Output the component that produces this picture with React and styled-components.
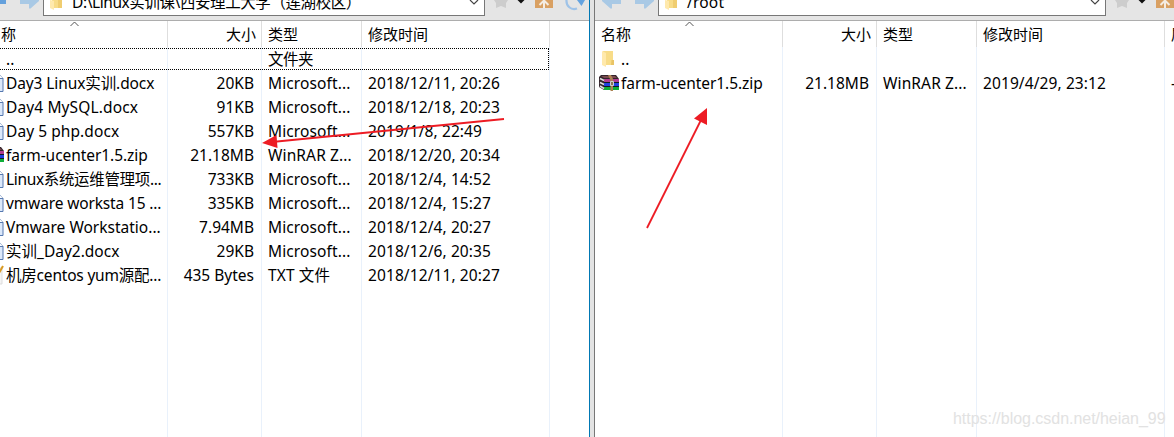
import React from 'react';
import styled, { createGlobalStyle } from 'styled-components';

const Global = createGlobalStyle`
  * { box-sizing: border-box; }
  body { margin: 0; background: #fff; overflow: hidden; }
`;

const Window = styled.div`
  position: relative;
  display: flex;
  width: 1174px;
  height: 437px;
  overflow: hidden;
  color: #000;
  background: #fff;
  font: 15.5px/24px 'Noto Sans', 'Noto Sans CJK SC', sans-serif;
`;

const Pane = styled.section`
  display: flex;
  flex-direction: column;
  flex: none;
  width: ${p => p.$width}px;
  overflow: hidden;
  background: #fff;
`;

const Splitter = styled.div`
  flex: none;
  width: 6px;
  background: #e3e3e3;
  border-left: 1px solid #0078b4;
  border-right: 1px solid #777;
`;

const Toolbar = styled.div`
  display: flex;
  align-items: flex-start;
  flex: none;
  height: 21px;
  margin-left: ${p => p.$shift}px;
  background: #e5e5e5;
  border-bottom: 1px solid #adadad;
  svg { display: block; flex: none; }
`;

const NavButtons = styled.div`
  display: flex;
  gap: 12px;
  width: 63px;
  flex: none;
  padding-left: 7px;
`;

const Address = styled.div`
  display: flex;
  flex: none;
  width: ${p => p.$width}px;
  height: 16px;
  padding: 0 5px 0 6px;
  background: #fff;
  border: 1px solid #777;
  border-top: 0;
`;

const Path = styled.span`
  flex: 1;
  height: 25px;
  margin: -10px 0 0 10px;
  line-height: 24px;
  white-space: nowrap;
  letter-spacing: ${p => p.$track || 0}px;
`;

const Tools = styled.div`
  display: flex;
  padding-left: 9px;
`;

const Gap = styled.span`
  width: ${p => p.$size}px;
`;

const List = styled.div`
  display: flex;
  flex: 1;
  margin-left: ${p => p.$shift}px;
`;

const Column = styled.div`
  flex: none;
  width: ${p => p.$width}px;
  border-right: 1px solid #e9f1fb;
  letter-spacing: ${p => p.$track || 0}px;
`;

const Header = styled.div`
  position: relative;
  height: 26px;
  margin-right: -1px;
  padding: 1px ${p => (p.$right ? 5 : 6)}px 0 6px;
  border-right: 1px solid #dedede;
  text-align: ${p => (p.$right ? 'right' : 'left')};
  white-space: nowrap;
  font-size: 15px;
  letter-spacing: 0;
`;

const SortMark = styled.svg`
  position: absolute;
  left: 90px;
  top: 0;
`;

const Cell = styled.div`
  display: flex;
  align-items: center;
  justify-content: ${p => (p.$right ? 'flex-end' : 'flex-start')};
  height: 24px;
  padding: 0 ${p => (p.$right ? 7 : 0)}px 0 ${p => (p.$icon ? 4 : 6)}px;
  white-space: nowrap;
  svg { flex: none; margin-right: 2px; }
`;

const Label = styled.span`
  letter-spacing: ${p => (p.$track === undefined ? 'inherit' : `${p.$track}px`)};
`;

const FocusFrame = styled.div`
  position: absolute;
  left: -2px;
  top: 48px;
  width: 551px;
  height: 22px;
  border: 1px dotted #000;
`;

const Overlay = styled.svg`
  position: absolute;
  inset: 0;
  pointer-events: none;
`;

const Watermark = styled.div`
  position: absolute;
  left: 953px;
  top: 409px;
  font: 16px/20px 'Liberation Sans', sans-serif;
  letter-spacing: -0.03px;
  color: #e2e2e2;
`;

const FolderIcon = () => (
  <svg width="20" height="20" viewBox="0 0 20 20">
    <path d="M4 2h10v14H6z" fill="#f8dc88" />
    <path d="M12.500 11h2.500v5h-3z" fill="#e9c466" />
    <path d="M3 2l4 2v14l-4-2z" fill="#ffe9ac" />
  </svg>
);

const DocIcon = () => (
  <svg width="20" height="20" viewBox="0 0 20 20">
    <path d="M5 1.500h10l4 4v13H5z" fill="#dbe8fa" stroke="#5679b0" />
    <path d="M15 1.500v4h4" fill="#fff" stroke="#5679b0" />
  </svg>
);

const TextIcon = () => (
  <svg width="20" height="20" viewBox="0 0 20 20">
    <path d="M3 3h15v16H3z" fill="#f4f4f4" stroke="#ddd" />
    <path d="M19 1l-4 7" stroke="#d99a22" strokeWidth="2" />
  </svg>
);

const ArchiveIcon = () => (
  <svg width="20" height="16" viewBox="0 0 20 16">
    <path d="M0 2l2-2h15l3 4v11H5l-5-3z" fill="#33242c" />
    <path d="M2 1h14l2 2H5z" fill="#7a4a4c" />
    <path d="M5 4h15v3H5z" fill="#b03c90" />
    <path d="M5 8h15v3H5z" fill="#2040e0" />
    <path d="M5 12h15v3H5z" fill="#0fae38" />
    <path d="M5 7.500h15M5 11.500h15" stroke="#111a20" />
    <path d="M1 3.500l4 2M1 7.500l4 2M1 11l4 2.500" stroke="#ddd" strokeWidth="1.600" />
    <path d="M9 0h3l2 4v12h-2.500V5z" fill="#ad8354" />
    <path d="M11.500 6.500h3v4h-3z" fill="#8a7355" stroke="#ccc" />
  </svg>
);

const ArrowSvg = styled.svg`
  transform: ${p => (p.$flip ? 'scaleX(-1)' : 'none')};
`;

const NavArrow = ({ flip, color }) => (
  <ArrowSvg $flip={flip} width="20" height="9" viewBox="0 0 20 9">
    <path d="M0 0h19v4H10v4.500L8.500 8.500 0 1z" fill={color} />
  </ArrowSvg>
);

const Star = () => (
  <svg width="14" height="8" viewBox="0 0 14 8"><path d="M0 0h14l-2 3v5L7 6 2 8V3z" fill="#cdcdcd" /></svg>
);
const DropArrow = () => (
  <svg width="8" height="4" viewBox="0 0 8 4"><path d="M0.500 0h7L4 3.500z" fill="#111" /></svg>
);
const UpFolder = () => (
  <svg width="18" height="9" viewBox="0 0 18 9">
    <path d="M0 0h18v8H0z" fill="#d9a062" />
    <path d="M9 1v7M4.500 5L9 .5 13.500 5" fill="none" stroke="#f4ece2" strokeWidth="2" />
  </svg>
);
const Refresh = () => (
  <svg width="21" height="11" viewBox="0 0 21 11">
    <path d="M1.500 0C1 6 6 10.500 12 8.500" fill="none" stroke="#9fc3e8" strokeWidth="2.200" />
    <path d="M12 0h8l-3.500 6z" fill="#64a3e0" />
  </svg>
);
const Chevron = () => (
  <svg width="10" height="6" viewBox="0 0 10 6"><path d="M1 0l4 4 4-4" fill="none" stroke="#444" strokeWidth="1.200" /></svg>
);

const icons = { folder: FolderIcon, doc: DocIcon, text: TextIcon, zip: ArchiveIcon };

const localFiles = [
  { icon: 'folder', typeTrack: -0.5, cells: ['..', '', '文件夹', ''] },
  { icon: 'doc', track: -0.1, cells: ['Day3 Linux实训.docx', '20KB', 'Microsoft...', '2018/12/11, 20:26'] },
  { icon: 'doc', track: 0.12, cells: ['Day4 MySQL.docx', '91KB', 'Microsoft...', '2018/12/18, 20:23'] },
  { icon: 'doc', track: 0.07, cells: ['Day 5 php.docx', '557KB', 'Microsoft...', '2019/1/8, 22:49'] },
  { icon: 'zip', track: -0.06, cells: ['farm-ucenter1.5.zip', '21.18MB', 'WinRAR Z...', '2018/12/20, 20:34'] },
  { icon: 'doc', track: -0.34, cells: ['Linux系统运维管理项...', '733KB', 'Microsoft...', '2018/12/4, 14:52'] },
  { icon: 'doc', track: -0.14, cells: ['vmware worksta 15 ...', '335KB', 'Microsoft...', '2018/12/4, 15:27'] },
  { icon: 'doc', track: 0, cells: ['Vmware Workstatio...', '7.94MB', 'Microsoft...', '2018/12/4, 20:27'] },
  { icon: 'doc', track: 0, cells: ['实训_Day2.docx', '29KB', 'Microsoft...', '2018/12/6, 20:35'] },
  { icon: 'text', track: -0.2, cells: ['机房centos yum源配...', '435 Bytes', 'TXT 文件', '2018/12/11, 20:27'] },
];

const remoteFiles = [
  { icon: 'folder', cells: ['..', '', '', '', ''] },
  { icon: 'zip', track: -0.06, cells: ['farm-ucenter1.5.zip', '21.18MB', 'WinRAR Z...', '2019/4/29, 23:12', '-rw'] },
];

const columns = [
  { title: '名称', width: 188 },
  { title: '大小', width: 94, right: true },
  { title: '类型', width: 100, track: 0.12 },
  { title: '修改时间', width: 188, track: 0.1 },
];

function FileList({ files, shift = 0, extra }) {
  const shown = extra ? [...columns, extra] : columns;
  return (
    <List $shift={shift}>
      {shown.map((col, i) => (
        <Column key={col.title} $width={col.width} $track={col.track}>
          <Header $right={col.right}>
            {col.title}
            {i === 0 && (
              <SortMark width="9" height="6" viewBox="0 0 9 6">
                <path d="M.5 5l4-4 4 4" fill="none" stroke="#555" />
              </SortMark>
            )}
          </Header>
          {files.map((file, n) => {
            const Icon = icons[file.icon];
            const tracks = [file.track, undefined, file.typeTrack];
            return (
              <Cell key={n} $right={col.right} $icon={i === 0}>
                {i === 0 && <Icon />}
                <Label $track={tracks[i]}>{file.cells[i]}</Label>
              </Cell>
            );
          })}
        </Column>
      ))}
    </List>
  );
}

function AddressBar({ path, width, shift = 0, firstColor, track }) {
  return (
    <Toolbar $shift={shift}>
      <NavButtons>
        <NavArrow color={firstColor} />
        <NavArrow flip color="#a9c9e5" />
      </NavButtons>
      <Address $width={width}>
        <svg width="12" height="10" viewBox="0 0 12 10">
          <path d="M2 0h7v8H2z" fill="#f8dc88" />
          <path d="M8 0h4v8H8z" fill="#f0cd70" />
          <path d="M0 0l4 1v9L0 8z" fill="#ffe9ac" />
        </svg>
        <Path $track={track}>{path}</Path>
        <Chevron />
      </Address>
      <Tools>
        <Star />
        <Gap $size={9} /><DropArrow />
        <Gap $size={10} /><UpFolder />
        <Gap $size={12} /><Refresh />
      </Tools>
    </Toolbar>
  );
}

export default function App() {
  return (
    <Window>
      <Global />
      <Pane $width={589}>
        <AddressBar shift={-20} width={442} path="D:\Linux实训课\西安理工大学（莲湖校区）" firstColor="#64a0dc" track={-0.42} />
        <FileList shift={-20} files={localFiles} />
      </Pane>
      <Splitter />
      <Pane $width={579}>
        <AddressBar width={448} path="/root" firstColor="#a9c9e5" track={0.2} />
        <FileList files={remoteFiles} extra={{ title: '属性', width: 80 }} />
      </Pane>
      <FocusFrame />
      <Overlay width="1174" height="437" viewBox="0 0 1174 437">
        <g fill="#ed1c24" stroke="#ed1c24">
          <path d="M504 119L272 142" strokeWidth="1.800" />
          <path d="M262 143l14.500-8 1 13z" stroke="none" />
          <path d="M647 228L701.500 119" strokeWidth="1.800" />
          <path d="M707 108l-13 10.500 13 6.500z" stroke="none" />
        </g>
      </Overlay>
      <Watermark>https://blog.csdn.net/heian_99</Watermark>
    </Window>
  );
}
